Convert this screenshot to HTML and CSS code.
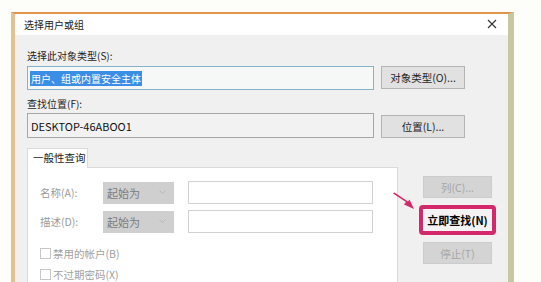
FILE: index.html
```html
<!DOCTYPE html>
<html lang="zh-CN">
<head>
    <meta charset="UTF-8">
    <meta name="viewport" content="width=device-width, initial-scale=1.0">
    <title>选择用户或组</title>
    <link rel="stylesheet" href="styles.css">
</head>
<body>
    <div class="dialog">
        <div class="titlebar">
            <span class="title">选择用户或组</span>
            <svg class="close" width="10" height="10" viewBox="0 0 10 10">
                <path d="M1 1 L9 9 M9 1 L1 9" stroke="#333" stroke-width="1.1" fill="none"/>
            </svg>
        </div>
        <div class="body">
            <div class="label">选择此对象类型(S):</div>
            <div class="row">
                <div class="field field-type"><span class="selected">用户、组或内置安全主体</span></div>
                <button class="btn">对象类型(O)...</button>
            </div>
            <div class="label label-second">查找位置(F):</div>
            <div class="row">
                <div class="field field-loc">DESKTOP-46ABOO1</div>
                <button class="btn btn-loc">位置(L)...</button>
            </div>
            <div class="lower">
                <div class="tabs">
                    <div class="tab">一般性查询</div>
                    <div class="panel">
                        <div class="qrow">
                            <span class="qlabel">名称(A):</span>
                            <span class="combo">起始为
                                <svg width="7" height="5" viewBox="0 0 7 5"><path d="M0.5 0.5 L3.5 3.5 L6.5 0.5" stroke="#b8b8b8" fill="none"/></svg>
                            </span>
                            <span class="qinput"></span>
                        </div>
                        <div class="qrow">
                            <span class="qlabel">描述(D):</span>
                            <span class="combo">起始为
                                <svg width="7" height="5" viewBox="0 0 7 5"><path d="M0.5 0.5 L3.5 3.5 L6.5 0.5" stroke="#b8b8b8" fill="none"/></svg>
                            </span>
                            <span class="qinput"></span>
                        </div>
                        <div class="check check-first"><span class="box"></span>禁用的帐户(B)</div>
                        <div class="check"><span class="box"></span>不过期密码(X)</div>
                    </div>
                </div>
                <div class="actions">
                    <button class="btn btn-off">列(C)...</button>
                    <button class="btn btn-find">立即查找(N)</button>
                    <button class="btn btn-off btn-stop">停止(T)</button>
                    <svg class="arrow" width="24" height="20" viewBox="0 0 24 20">
                        <path d="M1 1.5 L14 10 L12 12.5 L22 17 L17.5 7.5 L16 9.5 L2.5 0.5 Z" fill="#d3286a"/>
                    </svg>
                </div>
            </div>
        </div>
    </div>
</body>
</html>
```

FILE: styles.css
```css
body {
    margin: 0;
    background-color: #fdfdfa;
    font-family: "Noto Sans CJK SC", "Noto Sans", sans-serif;
    font-size: 10px;
    color: #1e1e1e;
    overflow: hidden;
}

.dialog {
    margin: 12px 0 0 11px;
    width: 493px;
    height: 268px;
    border-top: 2px solid #e0954a;
    border-left: 4px solid #e3c190;
    border-right: 6px solid #c8c8a0;
    background-color: #f0f0f0;
    overflow: hidden;
}

.titlebar {
    height: 21px;
    background-color: #ffffff;
    display: flex;
    align-items: center;
    justify-content: space-between;
    padding: 0 11px 0 9px;
}

.title {
    color: #222;
}

.close {
    margin-top: -1px;
}

.body {
    padding: 14px 0 0 12px;
}

.label {
    line-height: 14px;
    height: 14px;
    margin-bottom: 3px;
}

.label-second {
    margin-top: 7px;
    margin-bottom: 2px;
}

.row {
    display: flex;
    align-items: flex-start;
    gap: 7px;
}

.field {
    box-sizing: border-box;
    width: 347px;
    height: 24px;
    display: flex;
    align-items: center;
    padding-left: 2px;
}

.field-type {
    border: 1px solid #86b3c8;
    background-color: #f6f8f8;
}

.selected {
    background-color: #3a8ee6;
    color: #ffffff;
    line-height: 15px;
    padding: 0 1px;
}

.field-loc {
    height: 25px;
    border: 1px solid #a6a6a6;
    background-color: #f2f2f2;
    padding-left: 3px;
    font-size: 11px;
    color: #111;
}

.btn {
    box-sizing: border-box;
    width: 84px;
    height: 23px;
    border: 1px solid #b4b4b4;
    background-color: #e1e1e1;
    font-family: "Noto Sans CJK SC", "Noto Sans", sans-serif;
    font-size: 10.5px;
    color: #1e1e1e;
    padding: 0;
    cursor: pointer;
}

.btn-loc {
    margin-top: 2px;
}

.lower {
    display: flex;
    align-items: flex-start;
    margin-top: 10px;
}

.tabs {
    width: 371px;
}

.tab {
    box-sizing: border-box;
    width: 61px;
    height: 20px;
    line-height: 18px;
    padding-left: 5px;
    background-color: #ffffff;
    border: 1px solid #dadada;
    border-bottom: none;
    margin-bottom: -1px;
    position: relative;
    font-size: 10.5px;
    color: #1a1a1a;
}

.panel {
    height: 130px;
    background-color: #ffffff;
    border: 1px solid #dadada;
    padding: 13px 0 0 12px;
}

.qrow {
    display: flex;
    align-items: center;
    height: 23px;
    margin-bottom: 6px;
}

.qlabel {
    width: 63px;
    color: #9a9a9a;
    font-size: 10.5px;
}

.combo {
    box-sizing: border-box;
    width: 71px;
    height: 22px;
    background-color: #cfcfcf;
    color: #7c7c7c;
    display: flex;
    align-items: center;
    justify-content: space-between;
    padding: 0 8px 0 4px;
    font-size: 11px;
}

.qinput {
    box-sizing: border-box;
    width: 185px;
    height: 23px;
    margin-left: 14px;
    border: 1px solid #d2d2d2;
    background-color: #ffffff;
}

.check {
    display: flex;
    align-items: center;
    height: 12px;
    margin-bottom: 9px;
    color: #a0a0a0;
    font-size: 10.5px;
}

.check-first {
    margin-top: 14px;
}

.box {
    box-sizing: border-box;
    width: 11px;
    height: 11px;
    border: 1px solid #c8c8c8;
    margin-right: 2px;
}

.actions {
    position: relative;
    margin-left: 21px;
    padding-top: 28px;
    display: flex;
    flex-direction: column;
    align-items: flex-start;
}

.btn-off {
    width: 69px;
    height: 22px;
    margin-left: 4px;
    border: 1px solid #cccccc;
    background-color: #d4d4d4;
    color: #a6a6a6;
}

.btn-find {
    width: 77px;
    height: 30px;
    margin-top: 7px;
    border: 4px solid #d3286a;
    border-radius: 4px;
    background-color: #f4f2f2;
    color: #000;
    font-size: 11px;
    font-weight: bold;
}

.btn-stop {
    margin-top: 7px;
}

.arrow {
    position: absolute;
    left: -27px;
    top: 44px;
}
```
